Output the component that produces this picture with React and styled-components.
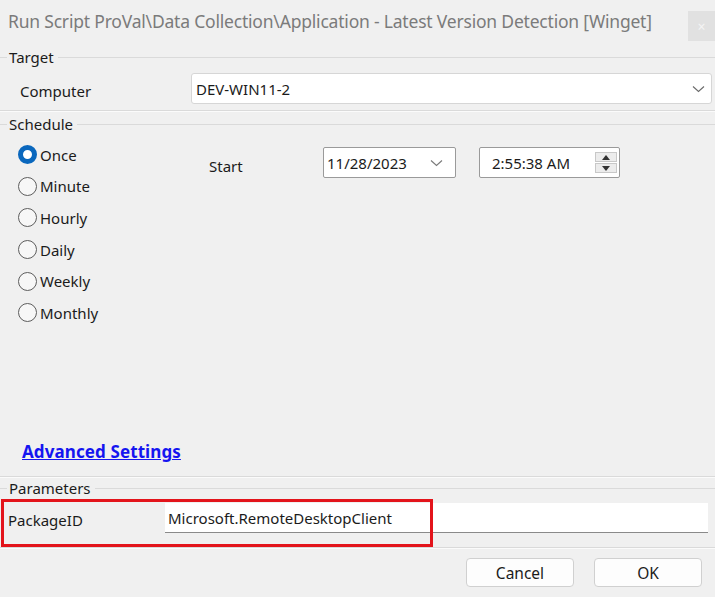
import styled, { createGlobalStyle } from 'styled-components'

const GlobalStyle = createGlobalStyle`
  html, body {
    margin: 0;
    padding: 0;
    background: #f0f0f0;
  }
  * {
    box-sizing: border-box;
  }
`

const Window = styled.div`
  width: 715px;
  height: 597px;
  background: #f0f0f0;
  font-family: "Noto Sans", "Open Sans", sans-serif;
  color: #1b1b1b;
  display: flex;
  flex-direction: column;
  overflow: hidden;
`

const TitleBar = styled.div`
  height: 46px;
  display: flex;
  align-items: flex-start;
  justify-content: space-between;
`

const Title = styled.div`
  padding: 9px 0 0 8px;
  font-size: 17.5px;
  color: #7b7b7b;
  white-space: nowrap;
  letter-spacing: -0.2px;
`

const CloseButton = styled.div`
  margin-top: 11px;
  width: 27px;
  height: 30px;
  background: #e1e1e1;
  display: flex;
  align-items: center;
  justify-content: center;
  color: #f4f4f4;
  font-size: 14px;
`

const Group = styled.section`
  display: flex;
  flex-direction: column;
  border-bottom: 1px solid #dadada;
  box-shadow: 0 1px 0 #fbfbfb;
  height: ${p => p.$height}px;
`

const GroupHeader = styled.div`
  height: 22px;
  display: flex;
  align-items: center;
  font-size: 15px;
  color: #1b1b1b;

  &::before {
    content: '';
    width: 7px;
    height: 1px;
    background: #dadada;
    margin-top: 1px;
  }

  &::after {
    content: '';
    flex: 1;
    height: 1px;
    background: #dadada;
    margin-left: 4px;
    margin-top: 1px;
  }
`

const HeaderText = styled.span`
  padding-left: 2px;
`

const FieldRow = styled.div`
  display: flex;
  align-items: center;
  padding: ${p => p.$pad};
`

const FieldLabel = styled.span`
  font-size: 15px;
  width: ${p => p.$width}px;
  padding-top: 4px;
`

const Combo = styled.div`
  flex: 1;
  height: 31px;
  background: #ffffff;
  border: 1px solid #d6d6d6;
  border-radius: 3px;
  display: flex;
  align-items: center;
  justify-content: space-between;
  padding: 0 6px 0 4px;
  font-size: 15px;
`

const Chevron = ({ color = '#6a6a6a' }) => (
  <svg width="13" height="8" viewBox="0 0 13 8">
    <path d="M1 1.5 L6.5 6.5 L12 1.5" fill="none" stroke={color} strokeWidth="1.1" />
  </svg>
)

const ScheduleBody = styled.div`
  flex: 1;
  display: flex;
  flex-direction: column;
`

const ScheduleTop = styled.div`
  display: flex;
  padding-top: 4px;
`

const RadioList = styled.div`
  display: flex;
  flex-direction: column;
  padding-left: 18px;
  width: 209px;
`

const RadioRow = styled.label`
  height: 31.6px;
  display: flex;
  align-items: center;
  gap: 3px;
  font-size: 15px;
`

const RadioCircle = styled.span`
  width: 19px;
  height: 19px;
  border-radius: 50%;
  background: ${p => (p.$checked ? '#ffffff' : '#f7f7f7')};
  border: ${p => (p.$checked ? '5px solid #0a67bd' : '1.5px solid #5d5d5d')};
`

const StartArea = styled.div`
  display: flex;
  align-items: flex-start;
  padding-top: 8px;
`

const StartLabel = styled.span`
  font-size: 15px;
  width: 114px;
  padding-top: 9px;
`

const DateBox = styled.div`
  width: ${p => p.$width}px;
  height: 31px;
  background: #ffffff;
  border: 1px solid #9a9a9a;
  border-radius: 2px;
  display: flex;
  align-items: center;
  justify-content: space-between;
  padding: ${p => p.$pad};
  font-size: 15px;
  margin-right: ${p => p.$gap || 0}px;
`

const Spinner = styled.div`
  display: flex;
  flex-direction: column;
  gap: 1px;
`

const SpinButton = styled.div`
  width: 22px;
  height: 10px;
  background: #ececec;
  border: 1px solid #c8c8c8;
  display: flex;
  align-items: center;
  justify-content: center;
`

const AdvancedLink = styled.a`
  margin-top: auto;
  margin-bottom: 13px;
  margin-left: 22px;
  font-size: 17px;
  font-weight: 700;
  color: #1515f0;
  text-decoration: underline;
  letter-spacing: 0.1px;
  cursor: pointer;
`

const ParamRow = styled.div`
  position: relative;
  display: flex;
  align-items: center;
  margin-top: 4px;
  padding: 0 7px 0 8px;
  height: 30px;
`

const ParamInput = styled.div`
  flex: 1;
  height: 30px;
  background: #ffffff;
  border-bottom: 1px solid #8a8a8a;
  display: flex;
  align-items: center;
  padding: 0 3px;
  font-size: 15px;
`

const Highlight = styled.div`
  position: absolute;
  left: 1px;
  top: -4px;
  width: 432px;
  height: 48px;
  border: 3px solid #e3141b;
  pointer-events: none;
`

const ButtonBar = styled.div`
  display: flex;
  justify-content: flex-end;
  gap: 20px;
  padding: 10px 13px 0 0;
`

const Button = styled.button`
  width: 108px;
  height: 29px;
  background: #fdfdfd;
  border: 1px solid #d0d0d0;
  border-radius: 4px;
  font-family: inherit;
  font-size: 15.5px;
  color: #1b1b1b;
`

const schedules = ['Once', 'Minute', 'Hourly', 'Daily', 'Weekly', 'Monthly']

export default function App() {
  return (
    <>
      <GlobalStyle />
      <Window>
        <TitleBar>
          <Title>Run Script ProVal\Data Collection\Application - Latest Version Detection [Winget]</Title>
          <CloseButton>×</CloseButton>
        </TitleBar>

        <Group $height={65}>
          <GroupHeader><HeaderText>Target</HeaderText></GroupHeader>
          <FieldRow $pad="5px 3px 0 20px">
            <FieldLabel $width={171}>Computer</FieldLabel>
            <Combo>
              <span>DEV-WIN11-2</span>
              <Chevron />
            </Combo>
          </FieldRow>
        </Group>

        <Group $height={366}>
          <GroupHeader style={{ marginTop: 2 }}><HeaderText>Schedule</HeaderText></GroupHeader>
          <ScheduleBody>
            <ScheduleTop>
              <RadioList>
                {schedules.map((s, i) => (
                  <RadioRow key={s}>
                    <RadioCircle $checked={i === 0} />
                    {s}
                  </RadioRow>
                ))}
              </RadioList>
              <StartArea>
                <StartLabel>Start</StartLabel>
                <DateBox $width={133} $pad="0 12px 0 3px" $gap={23}>
                  <span>11/28/2023</span>
                  <Chevron color="#7a7a7a" />
                </DateBox>
                <DateBox $width={141} $pad="0 2px 0 12px">
                  <span>2:55:38 AM</span>
                  <Spinner>
                    <SpinButton>
                      <svg width="8" height="5" viewBox="0 0 8 5"><path d="M0 5 L4 0 L8 5 Z" fill="#333" /></svg>
                    </SpinButton>
                    <SpinButton>
                      <svg width="8" height="5" viewBox="0 0 8 5"><path d="M0 0 L4 5 L8 0 Z" fill="#333" /></svg>
                    </SpinButton>
                  </Spinner>
                </DateBox>
              </StartArea>
            </ScheduleTop>
            <AdvancedLink>Advanced Settings</AdvancedLink>
          </ScheduleBody>
        </Group>

        <Group $height={71}>
          <GroupHeader><HeaderText>Parameters</HeaderText></GroupHeader>
          <ParamRow>
            <FieldLabel $width={157}>PackageID</FieldLabel>
            <ParamInput>Microsoft.RemoteDesktopClient</ParamInput>
            <Highlight />
          </ParamRow>
        </Group>

        <ButtonBar>
          <Button>Cancel</Button>
          <Button>OK</Button>
        </ButtonBar>
      </Window>
    </>
  )
}
